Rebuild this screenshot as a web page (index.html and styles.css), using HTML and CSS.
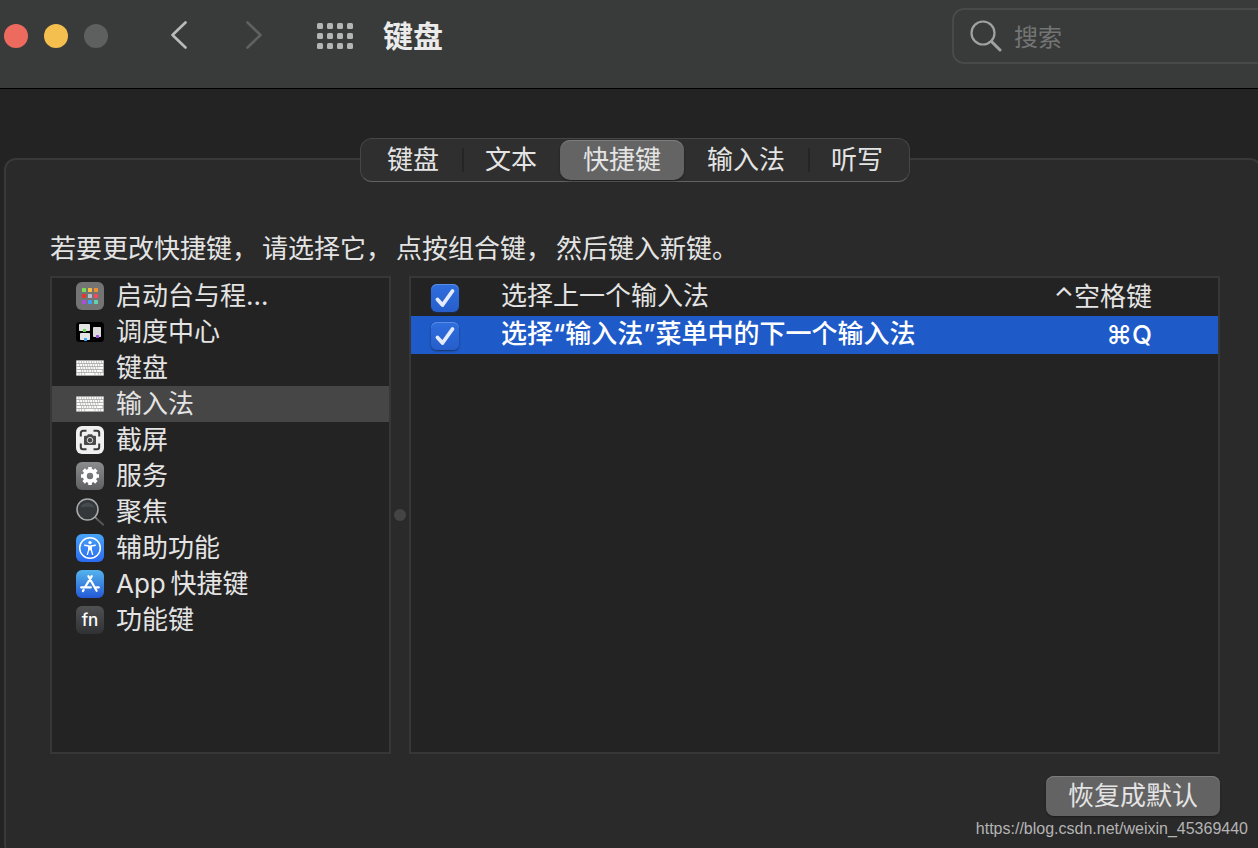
FILE: index.html
```html
<!DOCTYPE html>
<html lang="zh-CN">
<head>
<meta charset="utf-8">
<title>键盘</title>
<link rel="stylesheet" href="styles.css">
</head>
<body>
<svg class="defs" aria-hidden="true">
  <defs>
    <symbol id="keyboard" viewBox="0 0 28 28">
      <rect x="0" y="6" width="28" height="16" rx="1" fill="#a3a3a0"/>
      <g stroke="#fbfbfb" stroke-width="2.2">
        <path d="M.7 8.2H27.3" stroke-dasharray="1.9 .6"/>
        <path d="M.7 11.1H27.3" stroke-dasharray="2.8 .6 1.9 .6 1.9 .6 1.9 .6 1.9 .6 1.9 .6 1.9 .6 1.9 .6 1.9 .6 3"/>
        <path d="M.7 14H27.3" stroke-dasharray="3.4 .6 1.9 .6 1.9 .6 1.9 .6 1.9 .6 1.9 .6 1.9 .6 1.9 .6 5"/>
        <path d="M.7 16.9H27.3" stroke-dasharray="4.3 .6 1.9 .6 1.9 .6 1.9 .6 1.9 .6 1.9 .6 1.9 .6 6"/>
        <path d="M.7 19.8H27.3" stroke-dasharray="2 .6 2 .6 2.6 .6 9.6 .6 2.6 .6 2 .6 3"/>
      </g>
    </symbol>
    <symbol id="tick" viewBox="0 0 28 28">
      <path d="M6.5 15.5 11.5 21 21.5 7" fill="none" stroke="#e4ecfb" stroke-width="3.8" stroke-linecap="round" stroke-linejoin="round"/>
    </symbol>
    <linearGradient id="blue" x2="0" y2="1"><stop stop-color="#48a4f8"/><stop offset="1" stop-color="#2a6af0"/></linearGradient>
    <linearGradient id="store" x2="0" y2="1"><stop stop-color="#54b4ec"/><stop offset="1" stop-color="#2459d6"/></linearGradient>
    <linearGradient id="grey" x2="0" y2="1"><stop stop-color="#8b8c8e"/><stop offset="1" stop-color="#5f6062"/></linearGradient>
    <linearGradient id="dark" x2="0" y2="1"><stop stop-color="#505152"/><stop offset="1" stop-color="#303132"/></linearGradient>
  </defs>
</svg>

<header class="titlebar">
  <div class="lights">
    <button class="light light-close" aria-label="关闭"></button>
    <button class="light light-min" aria-label="最小化"></button>
    <button class="light light-zoom" aria-label="缩放" disabled></button>
  </div>
  <nav class="nav">
    <button class="icon-btn" aria-label="后退"><svg width="20" height="30" viewBox="0 0 20 30"><path d="M15.500 1.500 2.500 14 15.500 26.500" fill="none" stroke="#b9bbba" stroke-width="2.600" stroke-linecap="round" stroke-linejoin="round"/></svg></button>
    <button class="icon-btn" aria-label="前进" disabled><svg width="20" height="30" viewBox="0 0 20 30"><path d="M3.500 1.500 16.500 14 3.500 26.500" fill="none" stroke="#5f6160" stroke-width="2.600" stroke-linecap="round" stroke-linejoin="round"/></svg></button>
  </nav>
  <button class="icon-btn" aria-label="显示全部"><svg width="36" height="26" viewBox="0 0 36 26" fill="#b4b6b5">
    <rect x="0" y="0" width="6" height="6" rx="1.500"/><rect x="10" y="0" width="6" height="6" rx="1.500"/><rect x="20" y="0" width="6" height="6" rx="1.500"/><rect x="30" y="0" width="6" height="6" rx="1.500"/>
    <rect x="0" y="10" width="6" height="6" rx="1.500"/><rect x="10" y="10" width="6" height="6" rx="1.500"/><rect x="20" y="10" width="6" height="6" rx="1.500"/><rect x="30" y="10" width="6" height="6" rx="1.500"/>
    <rect x="0" y="20" width="6" height="6" rx="1.500"/><rect x="10" y="20" width="6" height="6" rx="1.500"/><rect x="20" y="20" width="6" height="6" rx="1.500"/><rect x="30" y="20" width="6" height="6" rx="1.500"/>
  </svg></button>
  <h1 class="title">键盘</h1>
  <label class="search">
    <svg width="32" height="32" viewBox="0 0 32 32"><circle cx="13" cy="13" r="11.500" fill="none" stroke="#a0a2a1" stroke-width="2.200"/><path d="M21.500 21.500 30 30" stroke="#a0a2a1" stroke-width="3" stroke-linecap="round"/></svg>
    <input class="search-input" type="search" placeholder="搜索" aria-label="搜索">
  </label>
</header>

<main class="panel">
  <div class="tabs" role="tablist">
    <button class="tab" role="tab">键盘</button>
    <button class="tab tab-divided" role="tab">文本</button>
    <button class="tab tab-active" role="tab" aria-selected="true">快捷键</button>
    <button class="tab" role="tab">输入法</button>
    <button class="tab tab-divided" role="tab">听写</button>
  </div>

  <p class="hint"><span>若要更改快捷键，</span><span>请选择它，</span><span>点按组合键，</span><span>然后键入新键。</span></p>

  <div class="columns">
    <ul class="categories">
      <li><button class="category"><svg class="icon" viewBox="0 0 28 28"><rect width="28" height="28" rx="6" fill="#747474"/>
        <rect x="6" y="6" width="4" height="4" rx=".5" fill="#7ddd55"/><rect x="12" y="6" width="4" height="4" rx=".5" fill="#f4be42"/><rect x="18" y="6" width="4" height="4" rx=".5" fill="#ef9234"/>
        <rect x="6" y="12" width="4" height="4" rx=".5" fill="#dd3a2c"/><rect x="12" y="12" width="4" height="4" rx=".5" fill="#b5bec8"/><rect x="18" y="12" width="4" height="4" rx=".5" fill="#ef4a5e"/>
        <rect x="6" y="18" width="4" height="4" rx=".5" fill="#a650dc"/><rect x="12" y="18" width="4" height="4" rx=".5" fill="#3da2f4"/><rect x="18" y="18" width="4" height="4" rx=".5" fill="#62d3ae"/></svg>启动台与程…</button></li>
      <li><button class="category"><svg class="icon" viewBox="0 0 28 28"><rect y="4" width="28" height="20" rx="3.500" fill="#000"/>
        <rect x="3" y="6" width="11" height="7" rx=".8" fill="#e4e4e4"/><rect x="4" y="15" width="10" height="7" rx=".8" fill="#e4e4e4"/><rect x="17" y="9" width="8" height="10" rx=".8" fill="#dcdcdc"/>
        <rect x="7" y="11" width="3" height="3" rx=".6" fill="#67d94d"/><rect x="8" y="20" width="3" height="3" rx=".6" fill="#39a5f4"/><rect x="20" y="17" width="3" height="3" rx=".6" fill="#9b51dc"/></svg>调度中心</button></li>
      <li><button class="category"><svg class="icon"><use href="#keyboard"/></svg>键盘</button></li>
      <li><button class="category category-active" aria-current="true"><svg class="icon"><use href="#keyboard"/></svg>输入法</button></li>
      <li><button class="category"><svg class="icon" viewBox="0 0 28 28"><rect width="28" height="28" rx="6" fill="#f0f0f0"/>
        <path d="M4.800 10.500V7a2.200 2.200 0 0 1 2.200-2.200h3.500M17.500 4.800H21A2.200 2.200 0 0 1 23.200 7v3.500M23.200 17.500V21a2.200 2.200 0 0 1-2.200 2.200h-3.500M10.500 23.200H7A2.200 2.200 0 0 1 4.800 21v-3.500" fill="none" stroke="#3c3c3c" stroke-width="2"/>
        <path d="M9 9.800h2l1-1.600h4l1 1.600h2a1 1 0 0 1 1 1V18a1 1 0 0 1-1 1H9a1 1 0 0 1-1-1v-7.200a1 1 0 0 1 1-1z" fill="#4a4a4a"/><circle cx="14" cy="14.200" r="2.800" fill="none" stroke="#ddd"/></svg>截屏</button></li>
      <li><button class="category"><svg class="icon" viewBox="0 0 28 28"><rect width="28" height="28" rx="6" fill="url(#grey)"/>
        <circle cx="14" cy="14" r="5.200" fill="none" stroke="#fff" stroke-width="4"/>
        <path d="M14 5v3M14 20v3M5 14h3M20 14h3M7.640 7.640l2.120 2.120M18.240 18.240l2.120 2.120M7.640 20.360l2.120-2.120M18.240 9.760l2.120-2.120" stroke="#fff" stroke-width="3.600"/></svg>服务</button></li>
      <li><button class="category"><svg class="icon" viewBox="0 0 28 28"><path d="M19 19l3.500 3.500" stroke="#888" stroke-width="1.600"/><path d="M21.500 21.500 27 26.500" stroke="#555" stroke-width="2.200" stroke-linecap="round"/><circle cx="11.500" cy="11.500" r="10.500" fill="#34383b" stroke="#a9abad" stroke-width="1.500"/><path d="M4.500 9.500a7.500 7.500 0 0 1 14 0c-5-1-9-1-14 0z" fill="#454b50"/></svg>聚焦</button></li>
      <li><button class="category"><svg class="icon" viewBox="0 0 28 28"><rect width="28" height="28" rx="6" fill="url(#blue)"/><circle cx="14" cy="14" r="10.300" fill="none" stroke="#fff" stroke-width="1.500"/><circle cx="14" cy="8.600" r="1.700" fill="#fff"/>
        <path d="M8.700 11.300 12.800 12v3.600L11.400 20.400M19.300 11.300 15.200 12v3.600L16.600 20.400" fill="none" stroke="#fff" stroke-width="1.400" stroke-linecap="round" stroke-linejoin="round"/><path d="M12.400 11.500h3.200v4.800h-3.200z" fill="#fff"/></svg>辅助功能</button></li>
      <li><button class="category"><svg class="icon" viewBox="0 0 28 28"><rect width="28" height="28" rx="6" fill="url(#store)"/><g fill="none" stroke="#fff" stroke-width="2.200" stroke-linecap="round"><path d="M15.800 6.200 9.500 16.300M12.400 6.200 20.600 20.800M5.200 17.400h9.600M19 17.400h3.800M7.600 20l-.7 1"/></g></svg>App&thinsp;快捷键</button></li>
      <li><button class="category"><svg class="icon" viewBox="0 0 28 28"><rect width="28" height="28" rx="6" fill="url(#dark)"/><text class="fn" x="14" y="20" text-anchor="middle">fn</text></svg>功能键</button></li>
    </ul>
    <div class="splitter"><span class="grip"></span></div>
    <div class="shortcuts">
      <table class="shortcut-table">
        <tbody>
          <tr>
            <td class="cell-check"><span class="check"><input class="check-input" type="checkbox" id="prev" checked><svg class="check-mark"><use href="#tick"/></svg></span></td>
            <td class="cell-name"><label for="prev">选择上一个输入法</label></td>
            <td class="cell-key">⌃空格键</td>
          </tr>
          <tr class="row-active">
            <td class="cell-check"><span class="check"><input class="check-input" type="checkbox" id="next" checked><svg class="check-mark"><use href="#tick"/></svg></span></td>
            <td class="cell-name"><label for="next">选择“输入法”菜单中的下一个输入法</label></td>
            <td class="cell-key">⌘Q</td>
          </tr>
        </tbody>
      </table>
    </div>
  </div>

  <div class="actions"><button class="restore">恢复成默认</button></div>
</main>
<a class="credit" href="https://blog.csdn.net/weixin_45369440">https://blog.csdn.net/weixin_45369440</a>
</body>
</html>
```
FILE: styles.css
```css
* {
  box-sizing: border-box;
}

body {
  margin: 0;
  height: 100vh;
  min-height: 760px;
  display: flex;
  flex-direction: column;
  overflow: hidden;
  position: relative;
  background: #232323;
  color: #e4e4e4;
  font-family: Inter, "Noto Sans CJK SC", sans-serif;
  font-size: 26px;
  line-height: 36px;
}

button,
input {
  font: inherit;
  color: inherit;
  border: 0;
  padding: 0;
  margin: 0;
  background: none;
}

.defs {
  position: absolute;
  width: 0;
  height: 0;
}

.titlebar {
  display: flex;
  align-items: center;
  height: 89px;
  flex: none;
  padding: 0 0 16px 4px;
  background: #393b3a;
  border-bottom: 1px solid #000;
}

.lights {
  display: flex;
  gap: 16px;
}

.light {
  width: 24px;
  height: 24px;
  border-radius: 50%;
}

.light-close { background: #ed6a5e; }
.light-min { background: #f5bf4f; }
.light-zoom { background: #5e605f; }

.nav {
  display: flex;
  gap: 54px;
  margin: 0 53px 0 62px;
}

.icon-btn {
  display: flex;
}

.title {
  margin: 0 auto 0 30px;
  font-size: 30px;
  font-weight: 700;
  color: #ebebeb;
}

.search {
  display: flex;
  align-items: center;
  gap: 12px;
  width: 320px;
  height: 56px;
  margin-right: -14px;
  padding-left: 16px;
  border: 2px solid #484a49;
  border-radius: 12px;
}

.search-input {
  flex: 1;
  min-width: 0;
  padding-top: 4px;
  font-size: 24px;
  outline: 0;
}

.search-input::placeholder {
  color: #737574;
}

.panel {
  flex: 1;
  display: flex;
  flex-direction: column;
  margin: 69px -4px -8px 4px;
  padding: 0 40px 38px 44px;
  border: 2px solid #393939;
  border-radius: 12px;
  background: #2a2a2a;
}

.tabs {
  display: flex;
  align-self: center;
  height: 44px;
  margin-top: -22px;
  padding: 1px 3px;
  border: 1px solid #464646;
  border-bottom-color: #626262;
  border-radius: 12px;
  background: #2f2f2f;
}

.tab {
  padding: 0 23px;
  line-height: 36px;
  border-radius: 10px;
}

.tab-divided {
  border-radius: 0;
  background: linear-gradient(#252525, #252525) left center / 2px 24px no-repeat;
}

.tab-active {
  background: #646464;
  box-shadow: inset 0 1px #7c7c7c, 0 1px 2px #1c1c1c;
}

.hint {
  display: flex;
  gap: 4px;
  margin: 49px 0 9px;
}

.columns {
  flex: 1;
  display: flex;
}

.categories {
  width: 341px;
  margin: 0;
  padding: 0;
  list-style: none;
  border: 2px solid #373737;
  background: #232323;
}

.category {
  display: flex;
  align-items: center;
  gap: 12px;
  width: 100%;
  height: 36px;
  padding-left: 24px;
  text-align: left;
}

.category-active {
  background: #464646;
}

.icon {
  width: 28px;
  height: 28px;
  flex: none;
}

.fn {
  font-size: 17px;
  font-weight: 500;
  fill: #fff;
}

.splitter {
  display: flex;
  align-items: center;
  justify-content: center;
  width: 18px;
}

.grip {
  flex: none;
  width: 12px;
  height: 12px;
  border-radius: 50%;
  background: #444;
}

.shortcuts {
  flex: 1;
  border: 2px solid #373737;
  background: #232323;
}

.shortcut-table {
  width: 100%;
  border-collapse: collapse;
}

.shortcut-table td {
  height: 38px;
  padding: 0;
}

.row-active {
  background: #1e5ac8;
  color: #fff;
  font-weight: 500;
}

.shortcut-table .cell-check {
  width: 90px;
  padding: 2px 0 0 20px;
}

.shortcut-table .cell-name {
  padding-bottom: 2px;
}

.shortcut-table .cell-key {
  padding-right: 66px;
  text-align: right;
}

.check {
  display: grid;
  width: 28px;
  height: 28px;
}

.check-input,
.check-mark {
  grid-area: 1 / 1;
  width: 28px;
  height: 28px;
}

.check-input {
  appearance: none;
  border-radius: 6px;
  background: linear-gradient(#2f6ddd, #265fcb);
  box-shadow: inset 0 1px #5b8ce6, 0 1px 2px #1a2f5c;
}

.check-mark {
  pointer-events: none;
}

.actions {
  display: flex;
  justify-content: flex-end;
  margin-top: 22px;
}

.restore {
  height: 40px;
  padding: 0 22px;
  border-radius: 8px;
  background: #636363;
  box-shadow: inset 0 1px #7c7c7c, 0 1px 2px #1c1c1c;
}

.credit {
  position: absolute;
  right: 10px;
  bottom: 8px;
  color: #b4b4b4;
  font-family: "Liberation Sans", Arial, sans-serif;
  font-size: 16px;
  line-height: 22px;
  text-decoration: none;
}
```
